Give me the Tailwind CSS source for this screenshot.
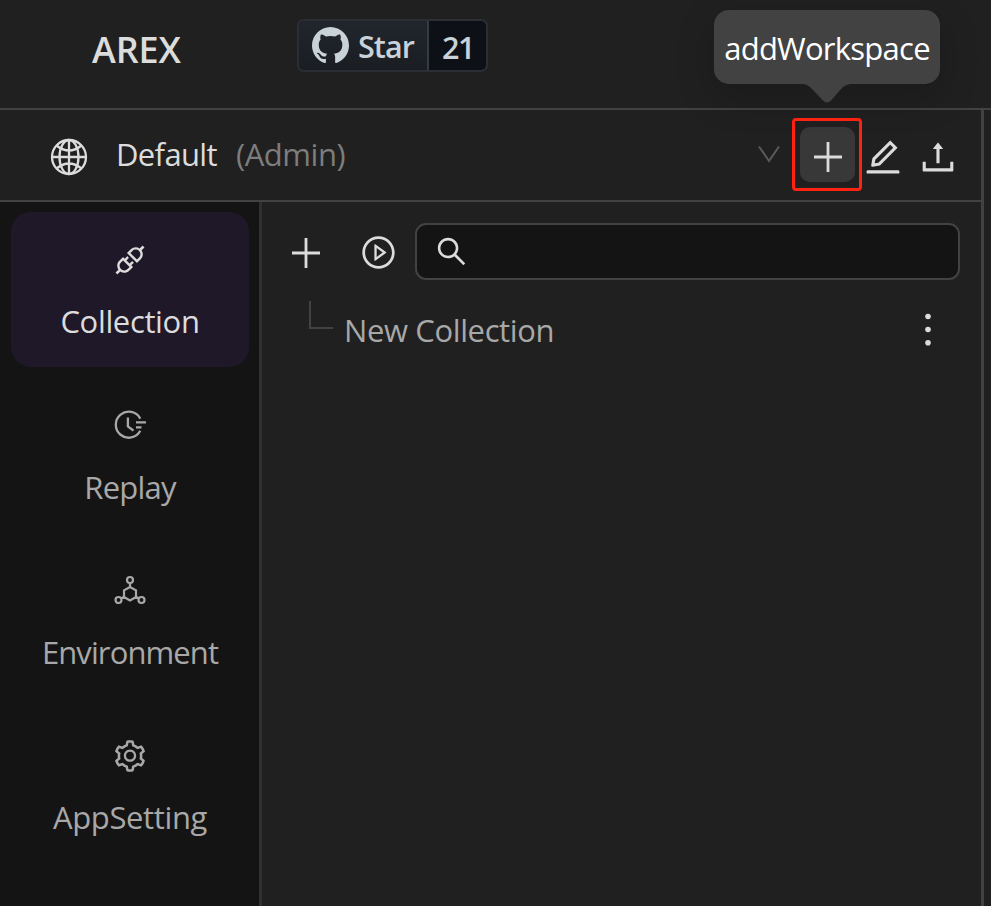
<!DOCTYPE html>
<html lang="en">
<head>
<meta charset="utf-8">
<title>AREX</title>
<script src="https://cdn.jsdelivr.net/npm/@tailwindcss/browser@4"></script>
</head>
<body class="w-[991px] h-[906px] overflow-hidden bg-[#202020] font-['Open_Sans',sans-serif] text-[31px] leading-[40px] text-[#dcdcdc] whitespace-nowrap flex flex-col">
<header class="relative h-[110px] shrink-0 border-b-2 border-[#424242] flex items-start">
  <h1 class="ml-[92px] mt-[30px] w-[205px] text-[36px] font-semibold tracking-[-0.1px]">AREX</h1>
  <div class="mt-[19px] h-[53px] w-[191px] flex rounded-[7px] border-2 border-[#2b2e34] overflow-hidden text-[#c9d1d9] font-semibold bg-[#0d1117]">
    <div class="w-[130px] shrink-0 flex items-center border-r-2 border-[#363b42] bg-linear-to-b from-[#21262d] to-[#1a1e23] pl-[13px]">
      <svg class="size-[37px] shrink-0" viewBox="0 0 16 16" fill="#c9d1d9"><path d="M8 0C3.58 0 0 3.58 0 8c0 3.54 2.29 6.53 5.47 7.59.4.07.55-.17.55-.38 0-.19-.01-.82-.01-1.49-2.01.37-2.53-.49-2.69-.94-.09-.23-.48-.94-.82-1.13-.28-.15-.68-.52-.01-.53.63-.01 1.08.58 1.23.82.72 1.21 1.87.87 2.33.66.07-.52.28-.87.51-1.07-1.78-.2-3.64-.89-3.64-3.95 0-.87.31-1.59.82-2.15-.08-.2-.36-1.02.08-2.12 0 0 .67-.21 2.2.82.64-.18 1.32-.27 2-.27s1.36.09 2 .27c1.53-1.04 2.2-.82 2.2-.82.44 1.1.16 1.92.08 2.12.51.56.82 1.27.82 2.15 0 3.07-1.87 3.75-3.65 3.95.29.25.54.73.54 1.48 0 1.07-.01 1.93-.01 2.2 0 .21.15.46.55.38A8.01 8.01 0 0 0 16 8c0-4.42-3.58-8-8-8z"/></svg>
      <span class="ml-[9px] text-[30.5px] tracking-[-0.9px] pt-px">Star</span>
    </div>
    <span class="flex-1 text-center text-[30.5px] tracking-[-1.5px] pt-[6px] pl-px">21</span>
  </div>
  <div class="absolute z-10 left-[714px] top-[10px] w-[226px] h-[74px] rounded-[15px] bg-[#424242] text-white flex items-center justify-center shadow-[0_12px_36px_4px_rgba(0,0,0,0.16)]">
    <span class="tracking-[-0.75px] pt-[2px]">addWorkspace</span>
    <svg class="absolute left-[88px] top-[73px] w-[50px] h-[21px]" viewBox="0 0 50 21" fill="#424242"><path d="M0 0H50V1Q44 1 40 5L29 17.500Q25 21.500 21 17.500L9 5Q5 1 0 1Z"/></svg>
  </div>
</header>
<div class="w-[984px] flex-1 min-h-0 border-r-3 border-[#424242] flex flex-col">
  <section class="h-[92px] shrink-0 border-b-2 border-[#424242] flex items-center">
    <svg class="ml-[50px] mt-[3px] size-[38px] shrink-0" viewBox="0 0 38 38" fill="none" stroke="#dcdcdc" stroke-width="2.300"><circle cx="19" cy="19" r="17"/><ellipse cx="19" cy="19" rx="9.500" ry="17"/><path d="M19 2V36M2 19H36M6.500 7.500Q19 17.500 31.500 7.500M6.500 30.500Q19 20.500 31.500 30.500"/></svg>
    <span class="ml-[28px] mb-[2px] w-[120px] tracking-[-0.65px]">Default</span>
    <span class="mb-[2px] w-[521px] text-[#7d7d7d] tracking-[-0.45px]">(Admin)</span>
    <svg class="mt-[-2px] w-[24px] h-[20px] shrink-0" viewBox="0 0 24 20" fill="none" stroke="#5a5a5a" stroke-width="2"><path d="M2 2.500L12 17L22 2.500"/></svg>
    <div class="ml-[11px] mt-[-1px] w-[70px] h-[73px] shrink-0 rounded-[4px] border-3 border-[#ff2312] flex justify-center pt-[6px] pl-px">
      <button class="size-[55px] rounded-[10px] bg-[#383838] flex items-center justify-center"><svg class="mt-[5px] w-[28px] h-[30px]" viewBox="0 0 28 30" stroke="#dcdcdc" stroke-width="2.800"><path d="M14 0V30M0 15H28"/></svg></button>
    </div>
    <svg class="mt-[3px] size-[42px] shrink-0" viewBox="0 0 1024 1024" fill="#dcdcdc"><path d="M257.700 752c2 0 4-.2 6-.5L431.900 722c2-.4 3.900-1.300 5.300-2.800l423.900-423.900a9.960 9.960 0 000-14.100L694.900 114.900c-1.900-1.900-4.400-2.900-7.100-2.900s-5.200 1-7.100 2.900L256.800 538.800c-1.500 1.500-2.400 3.300-2.800 5.300l-29.500 168.200a33.500 33.500 0 009.400 29.800c6.600 6.400 14.900 9.900 23.800 9.900zm67.400-174.400L687.800 215l73.300 73.300-362.700 362.600-88.900 15.700 15.600-89zM880 836H144c-17.700 0-32 14.300-32 32v36c0 4.400 3.600 8 8 8h784c4.400 0 8-3.600 8-8v-36c0-17.700-14.300-32-32-32z"/></svg>
    <svg class="ml-[13px] mt-[3px] size-[42px] shrink-0" viewBox="0 0 1024 1024" fill="#dcdcdc"><path d="M400 317.700h73.900V656c0 4.400 3.600 8 8 8h60c4.400 0 8-3.600 8-8V317.700H624c6.700 0 10.400-7.700 6.300-12.900L518.300 163a8 8 0 00-12.600 0l-112 141.700c-4.100 5.300-.4 13 6.300 13zM878 626h-60c-4.400 0-8 3.600-8 8v154H214V634c0-4.400-3.600-8-8-8h-60c-4.400 0-8 3.600-8 8v198c0 17.700 14.300 32 32 32h684c17.700 0 32-14.300 32-32V634c0-4.400-3.600-8-8-8z"/></svg>
  </section>
  <div class="flex flex-1 min-h-0">
    <nav class="w-[262px] shrink-0 bg-[#141414] border-r-3 border-[#303030] pl-[11px] pt-[10px] flex flex-col gap-[10.400px] text-[#a8a8a8]">
      <div class="w-[238px] h-[155px] shrink-0 rounded-[20px] bg-[#1f1829] text-[#dcdcdc] flex flex-col items-center pt-[30px]">
        <svg class="size-[36px]" viewBox="0 0 1024 1024" fill="currentColor"><path d="M917.700 148.800l-42.400-42.400c-1.600-1.600-3.600-2.300-5.700-2.300s-4.100.8-5.700 2.300l-76.100 76.100a199.270 199.270 0 00-112.100-34.300c-51.200 0-102.400 19.500-141.500 58.600L432.300 308.700a8.030 8.030 0 000 11.300L704 591.700c1.600 1.600 3.600 2.300 5.700 2.300 2 0 4.100-.8 5.700-2.300l101.900-101.900c68.900-69 77-175.700 24.300-253.500l76.100-76.100c3.100-3.200 3.100-8.300 0-11.400zM769.100 441.700l-59.400 59.400-186.800-186.800 59.400-59.400c24.900-24.900 58.100-38.700 93.400-38.700 35.300 0 68.400 13.700 93.400 38.700 24.900 24.900 38.700 58.100 38.700 93.400 0 35.300-13.800 68.400-38.700 93.400zm-190.200 105a8.030 8.030 0 00-11.300 0L501 613.300 410.700 523l66.700-66.700c3.100-3.100 3.100-8.200 0-11.300L441 408.600a8.030 8.030 0 00-11.300 0L363 475.300l-43-43a7.850 7.850 0 00-5.700-2.300c-2 0-4.100.8-5.700 2.300L206.800 534.200c-68.900 69-77 175.700-24.300 253.500l-76.100 76.100a8.030 8.030 0 000 11.300l42.400 42.400c1.600 1.600 3.600 2.300 5.700 2.300s4.100-.8 5.700-2.300l76.100-76.100c33.700 22.900 72.900 34.300 112.100 34.300 51.200 0 102.400-19.500 141.500-58.600l101.900-101.900c3.100-3.100 3.100-8.200 0-11.300l-43-43 66.700-66.700c3.100-3.100 3.100-8.200 0-11.300l-36.600-36.200zM441.700 769.100a131.320 131.320 0 01-93.400 38.700c-35.300 0-68.400-13.700-93.400-38.700a131.320 131.320 0 01-38.700-93.400c0-35.300 13.700-68.400 38.700-93.400l59.400-59.400 186.800 186.800-59.400 59.400z"/></svg>
        <span class="mt-[23px] tracking-[-0.35px]">Collection</span>
      </div>
      <div class="w-[238px] h-[155px] shrink-0 flex flex-col items-center pt-[31px]">
        <svg class="size-[36px]" viewBox="0 0 36 36" fill="none" stroke="currentColor" stroke-width="2.300"><path d="M28.300 10.600A13 13 0 1 0 28.300 22.800M15.900 9.500V18.500L21.500 22.700M24 14.300H34M24 19.300H29.500"/></svg>
        <span class="mt-[23px] tracking-[-0.8px]">Replay</span>
      </div>
      <div class="w-[238px] h-[155px] shrink-0 flex flex-col items-center pt-[31px]">
        <svg class="size-[36px]" viewBox="0 0 36 36" fill="none" stroke="currentColor" stroke-width="2.200"><circle cx="18" cy="6" r="3"/><circle cx="6.500" cy="26" r="3"/><circle cx="29.500" cy="26" r="3"/><path d="M18 9V13M9 24.500L12.500 22.500M27 24.500L23.500 22.500M18 13L24 16.300V23L18 26.500L12 23V16.300Z"/></svg>
        <span class="mt-[22px] tracking-[-0.9px]">Environment</span>
      </div>
      <div class="w-[238px] h-[155px] shrink-0 flex flex-col items-center pt-[30px]">
        <svg class="size-[36px]" viewBox="0 0 1024 1024" fill="currentColor"><path d="M924.800 625.700l-65.500-56c3.100-19 4.700-38.400 4.700-57.800s-1.600-38.800-4.700-57.800l65.500-56a32.030 32.030 0 009.300-35.200l-.9-2.600a442.500 442.500 0 00-79.700-137.900l-1.800-2.100a32.120 32.120 0 00-35.100-9.500l-81.300 28.900c-30-24.600-63.500-44-99.700-57.600l-15.700-85a32.050 32.050 0 00-25.800-25.700l-2.700-.5c-52.100-9.400-106.900-9.400-159 0l-2.700.5a32.050 32.050 0 00-25.800 25.700l-15.800 85.400a351.860 351.860 0 00-99 57.400l-81.900-29.100a32 32 0 00-35.100 9.500l-1.800 2.100a446.020 446.020 0 00-79.700 137.900l-.9 2.600c-4.500 12.500-.8 26.500 9.300 35.200l66.300 56.600c-3.100 18.800-4.600 38-4.600 57.100 0 19.200 1.500 38.400 4.600 57.100L99 625.500a32.030 32.030 0 00-9.300 35.200l.9 2.600c18.100 50.400 44.900 96.900 79.700 137.900l1.800 2.100a32.120 32.120 0 0035.100 9.500l81.900-29.100c29.800 24.500 63.100 43.900 99 57.400l15.800 85.400a32.050 32.050 0 0025.800 25.700l2.700.5a449.400 449.400 0 00159 0l2.700-.5a32.050 32.050 0 0025.800-25.700l15.700-85a350 350 0 0099.700-57.600l81.300 28.900a32 32 0 0035.100-9.500l1.800-2.100c34.800-41.100 61.600-87.500 79.700-137.900l.9-2.600c4.500-12.300.8-26.300-9.300-35zM788.300 465.900c2.500 15.100 3.800 30.600 3.800 46.100s-1.300 31-3.800 46.100l-6.600 40.100 74.700 63.900a370.030 370.030 0 01-42.600 73.600L721 702.800l-31.400 25.800c-23.900 19.600-50.500 35-79.300 45.800l-38.100 14.300-17.900 97a377.500 377.500 0 01-85 0l-17.900-97.200-37.800-14.500c-28.500-10.800-55-26.200-78.700-45.700l-31.400-25.900-93.400 33.200c-17-22.900-31.200-47.600-42.600-73.600l75.500-64.500-6.500-40c-2.400-14.900-3.700-30.300-3.700-45.500 0-15.300 1.200-30.600 3.700-45.500l6.500-40-75.500-64.500c11.300-26.100 25.600-50.700 42.600-73.600l93.400 33.200 31.400-25.900c23.700-19.500 50.200-34.900 78.700-45.700l37.900-14.300 17.900-97.200c28.100-3.200 56.800-3.200 85 0l17.900 97 38.100 14.300c28.700 10.800 55.400 26.200 79.300 45.800l31.400 25.800 92.800-32.900c17 22.900 31.200 47.600 42.600 73.600L781.800 426l6.500 39.900zM512 326c-97.200 0-176 78.800-176 176s78.800 176 176 176 176-78.800 176-176-78.800-176-176-176zm79.200 255.200A111.600 111.600 0 01512 614c-29.900 0-58-11.700-79.200-32.800A111.600 111.600 0 01400 502c0-29.900 11.700-58 32.800-79.200C454 401.600 482.100 390 512 390c29.900 0 58 11.600 79.200 32.800A111.600 111.600 0 01624 502c0 29.900-11.700 58-32.800 79.200z"/></svg>
        <span class="mt-[23px] tracking-[-0.35px]">AppSetting</span>
      </div>
    </nav>
    <main class="flex-1 pt-[21px]">
      <div class="flex items-center h-[57px]">
        <svg class="ml-[30px] mt-[3px] w-[28px] h-[30px]" viewBox="0 0 28 30" stroke="#dcdcdc" stroke-width="2.800"><path d="M14 0V30M0 15H28"/></svg>
        <svg class="ml-[39.500px] mt-[2px] size-[37px]" viewBox="0 0 1024 1024" fill="#dcdcdc"><path d="M512 64C264.600 64 64 264.600 64 512s200.600 448 448 448 448-200.600 448-448S759.400 64 512 64zm0 820c-205.400 0-372-166.600-372-372s166.600-372 372-372 372 166.600 372 372-166.600 372-372 372z"/><path d="M719.400 499.100l-296.100-215A15.900 15.900 0 00398 297v430c0 13.100 14.800 20.500 25.300 12.900l296.100-215a15.900 15.900 0 000-25.800zm-257.600 134V390.900L628.500 512 461.800 633.100z"/></svg>
        <div class="ml-[18.500px] w-[545px] h-[57px] rounded-[11px] border-2 border-[#424242] bg-[#141414] flex items-center pl-[17px]">
          <svg class="size-[35px]" viewBox="0 0 1024 1024" fill="#dcdcdc"><path d="M909.600 854.500L649.900 594.800C690.200 542.700 712 479 712 412c0-80.200-31.300-155.400-87.900-212.100-56.600-56.700-132-87.900-212.100-87.900s-155.500 31.300-212.100 87.900C143.200 256.500 112 331.800 112 412c0 80.100 31.300 155.500 87.900 212.100C256.500 680.800 331.800 712 412 712c67 0 130.600-21.800 182.700-62l259.700 259.600a8.200 8.200 0 0011.600 0l43.600-43.500a8.200 8.200 0 000-11.600zM570.400 570.400C528 612.700 471.800 636 412 636s-116-23.300-158.400-65.600C211.300 528 188 471.800 188 412s23.300-116.100 65.600-158.400C296 211.300 352.200 188 412 188s116.100 23.200 158.400 65.600S636 352.200 636 412s-23.300 116.100-65.600 158.400z"/></svg>
        </div>
      </div>
      <div class="mt-[21px] ml-[47px] flex items-start">
        <div class="w-[24px] h-[28px] border-l-2 border-b-2 border-[#424242]"></div>
        <span class="ml-[11px] mt-[9px] w-[580.500px] tracking-[-0.38px] text-[#a8a8a8]">New Collection</span>
        <svg class="mt-[12px] w-[6px] h-[34px]" viewBox="0 0 6 34" fill="#dcdcdc"><circle cx="3" cy="3.500" r="2.800"/><circle cx="3" cy="16.500" r="2.800"/><circle cx="3" cy="29.800" r="2.800"/></svg>
      </div>
    </main>
  </div>
</div>
</body>
</html>
